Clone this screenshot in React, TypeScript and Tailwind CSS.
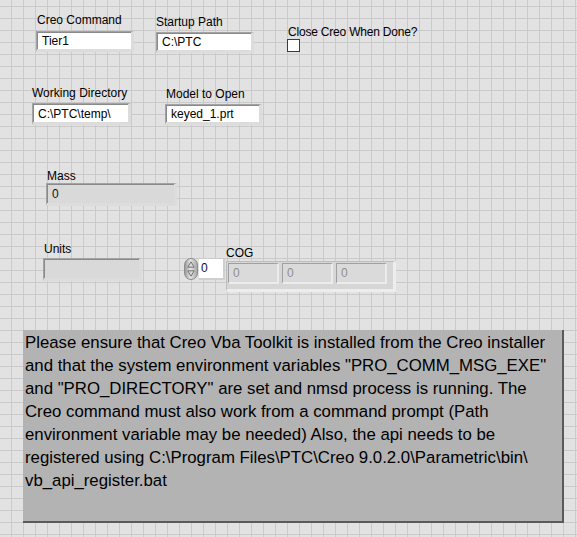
import React from "react";

function Field({
  w,
  h,
  value,
  white = true,
  textColor = "text-black",
}: {
  w: number;
  h: number;
  value?: string;
  white?: boolean;
  textColor?: string;
}) {
  return (
    <div
      className="border-t border-l border-t-[#a3a3a3] border-l-[#a3a3a3] border-r-[3px] border-b-[3px] border-r-[#dcdcdc] border-b-[#dcdcdc] bg-[#d2d2d2] box-border"
      style={{ width: w, height: h }}
    >
      <div
        className={`h-full w-full border-t border-l border-t-[#8a8a8a] border-l-[#8a8a8a] ${
          white ? "bg-white" : "bg-[#d9d9d9]"
        } ${textColor} flex items-center pl-[4px] text-[12px] leading-none`}
      >
        {value}
      </div>
    </div>
  );
}

function Label({ children }: { children: React.ReactNode }) {
  return <div className="text-[12px] leading-[15px] text-black whitespace-nowrap">{children}</div>;
}

function Spinner() {
  return (
    <div className="w-[14px] h-[22px] rounded-[7px] bg-[linear-gradient(to_right,#9a9a9a,#e6e6e6_45%,#a8a8a8)] border border-[#8c8c8c] flex flex-col items-center justify-center gap-[2px]">
      <svg width="8" height="7" viewBox="0 0 8 7">
        <path d="M4 0.8 L7.2 6.2 L0.8 6.2 Z" fill="#d8d8d8" stroke="#6a6a6a" strokeWidth="0.9" />
      </svg>
      <svg width="8" height="7" viewBox="0 0 8 7">
        <path d="M4 6.2 L7.2 0.8 L0.8 0.8 Z" fill="#d8d8d8" stroke="#6a6a6a" strokeWidth="0.9" />
      </svg>
    </div>
  );
}

function Cell() {
  return (
    <div className="w-[51px] h-[21px] border-t border-l border-t-[#a0a0a0] border-l-[#a0a0a0] border-r-[2px] border-b-[2px] border-r-[#ececec] border-b-[#ececec] bg-[#dadada] text-[#8f8f8f] text-[12px] flex items-center pl-[4px] box-border">
      0
    </div>
  );
}

export default function App() {
  return (
    <div className="w-[577px] h-[537px] overflow-hidden bg-[#e2e2e2] bg-[linear-gradient(to_right,#cacaca_1px,transparent_1px),linear-gradient(to_bottom,#cacaca_1px,transparent_1px)] bg-[size:12px_12px] bg-[position:11px_6px] font-['Liberation_Sans',Arial,sans-serif] text-black">
      {/* Row 1 */}
      <div className="flex items-start h-[73px] pt-[13px]">
        <div className="ml-[36px] w-[98px]">
          <div className="pl-[1px]"><Label>Creo Command</Label></div>
          <div className="mt-[3px]">
            <Field w={98} h={21} value="Tier1" />
          </div>
        </div>
        <div className="ml-[22px] mt-[2px] w-[98px]">
          <Label>Startup Path</Label>
          <div className="mt-[2px]">
            <Field w={98} h={21} value="C:\PTC" />
          </div>
        </div>
        <div className="ml-[33px] mt-[12px]">
          <div className="pl-[1px] tracking-[-0.2px]"><Label>Close Creo When Done?</Label></div>
          <div className="mt-[-1px] w-[13px] h-[13px] bg-white border border-[#3c3c3c]" />
        </div>
      </div>

      {/* Row 2 */}
      <div className="flex items-start h-[84px] pt-[13px]">
        <div className="ml-[32px] w-[99px]">
          <Label>Working Directory</Label>
          <div className="mt-[2px]">
            <Field w={99} h={22} value="C:\PTC\temp\" />
          </div>
        </div>
        <div className="ml-[34px] mt-[1px] w-[97px]">
          <div className="pl-[1px]"><Label>Model to Open</Label></div>
          <div className="mt-[2px]">
            <Field w={97} h={21} value="keyed_1.prt" />
          </div>
        </div>
      </div>

      {/* Mass */}
      <div className="flex items-start h-[75px] pt-[12px]">
        <div className="ml-[46px] w-[131px]">
          <div className="pl-[1px]"><Label>Mass</Label></div>
          <div className="mt-[-1px]">
            <Field w={131} h={23} value="0" white={false} textColor="text-[#111]" />
          </div>
        </div>
      </div>

      {/* Units / COG */}
      <div className="flex items-start h-[98px] pt-[10px]">
        <div className="ml-[43px] w-[99px]">
          <div className="pl-[1px]"><Label>Units</Label></div>
          <div className="mt-[1px]">
            <Field w={99} h={23} white={false} />
          </div>
        </div>
        <div className="ml-[42px] mt-[16px] flex items-center">
          <Spinner />
          <div className="ml-[1px] w-[26px] h-[21px] bg-white border-r-[2px] border-b-[2px] border-r-[#cfcfcf] border-b-[#cfcfcf] flex items-center pl-[2px] text-[12px] text-[#0c0c40]">
            0
          </div>
        </div>
        <div className="ml-[1px] mt-[4px]">
          <Label>COG</Label>
          <div className="mt-[0px] w-[170px] h-[31px] bg-[#d6d6d6] border-t border-l border-t-[#bdbdbd] border-l-[#bdbdbd] border-r-[3px] border-b-[3px] border-r-[#ededed] border-b-[#ededed] flex items-start gap-[3px] pl-[1px] pt-[1px] box-border">
            <Cell />
            <Cell />
            <Cell />
          </div>
        </div>
      </div>

      {/* Message panel */}
      <div className="ml-[23px] w-[541px] h-[193px] bg-[#b3b3b3] border-r-[2px] border-b-[2px] border-r-[#5a5a5a] border-b-[#5a5a5a] box-border pl-[2px] pt-[1px]">
        <p className="text-[16.8px] leading-[23px] text-black whitespace-nowrap">
          Please ensure that Creo Vba Toolkit is installed from the Creo installer
          <br />
          and that the system environment variables "PRO_COMM_MSG_EXE"
          <br />
          and "PRO_DIRECTORY" are set and nmsd process is running. The
          <br />
          Creo command must also work from a command prompt (Path
          <br />
          environment variable may be needed) Also, the api needs to be
          <br />
          registered using C:\Program Files\PTC\Creo 9.0.2.0\Parametric\bin\
          <br />
          vb_api_register.bat
        </p>
      </div>
    </div>
  );
}
